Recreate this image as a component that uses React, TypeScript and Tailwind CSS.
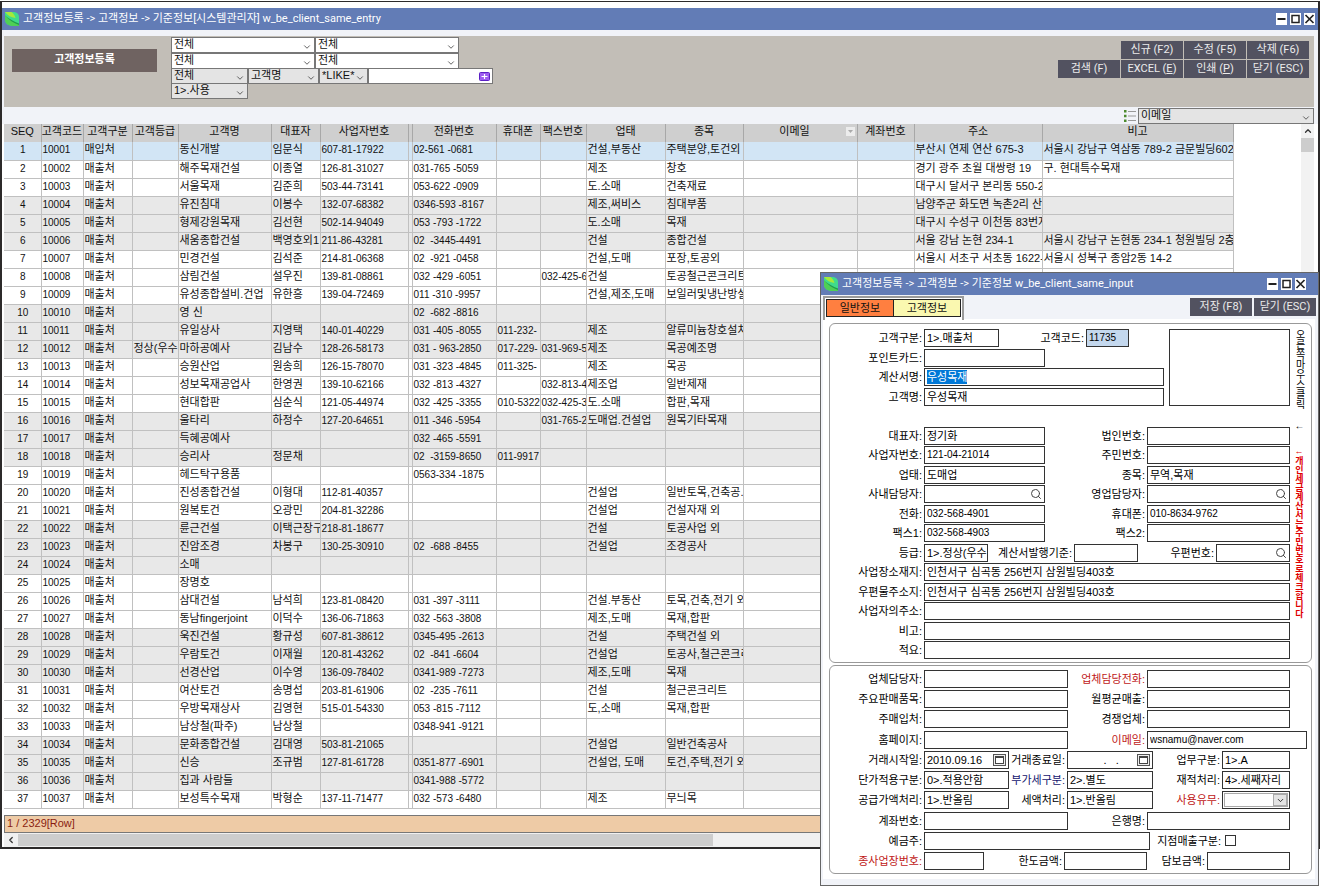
import { ReactNode } from "react";
import { ChevronDown, ChevronLeft, ChevronUp, Search } from "lucide-react";

type Column = { title: string; width: string; cell?: string };

const columns: Column[] = [
  { title: "SEQ", width: "w-[37px]", cell: "text-center text-[10px]" },
  { title: "고객코드", width: "w-[42px]", cell: "text-[10px]" },
  { title: "고객구분", width: "w-[49px]" },
  { title: "고객등급", width: "w-[46px]" },
  { title: "고객명", width: "w-[93px]" },
  { title: "대표자", width: "w-[49px]" },
  { title: "사업자번호", width: "w-[88px]", cell: "text-[10px]" },
  { title: "", width: "w-[4px]" },
  { title: "전화번호", width: "w-[84px]", cell: "text-[10px]" },
  { title: "휴대폰", width: "w-[44px]", cell: "text-[10px]" },
  { title: "팩스번호", width: "w-[46px]", cell: "text-[10px]" },
  { title: "업태", width: "w-[79px]" },
  { title: "종목", width: "w-[78px]" },
  { title: "이메일", width: "w-[114px]" },
  { title: "계좌번호", width: "w-[57px]" },
  { title: "주소", width: "w-[128px]" },
  { title: "비고", width: "w-[191px]" },
];

// 고객등급, 고객명, 대표자, 사업자번호, 전화번호, 휴대폰, 팩스번호, 업태, 종목, 주소, 비고
const clients: string[][] = [
  ["", "동신개발", "임문식", "607-81-17922", "02-561 -0681", "", "", "건설,부동산", "주택분양,토건외", "부산시 연제 연산 675-3", "서울시 강남구 역삼동 789-2 금문빌딩602호"],
  ["", "해주목재건설", "이종열", "126-81-31027", "031-765 -5059", "", "", "제조", "창호", "경기 광주 초월 대쌍령 19", "구. 현대특수목재"],
  ["", "서울목재", "김준희", "503-44-73141", "053-622 -0909", "", "", "도.소매", "건축재료", "대구시 달서구 본리동 550-2", ""],
  ["", "유진침대", "이봉수", "132-07-68382", "0346-593 -8167", "", "", "제조,써비스", "침대부품", "남양주군 화도면 녹촌2리 산", ""],
  ["", "형제강원목재", "김선현", "502-14-94049", "053 -793 -1722", "", "", "도.소매", "목재", "대구시 수성구 이천동 83번지", ""],
  ["", "새움종합건설", "백영호외1", "211-86-43281", "02  -3445-4491", "", "", "건설", "종합건설", "서울 강남 논현 234-1", "서울시 강남구 논현동 234-1 청원빌딩 2층"],
  ["", "민경건설", "김석준", "214-81-06368", "02  -921 -0458", "", "", "건설,도매", "포장,토공외", "서울시 서초구 서초동 1622-", "서울시 성북구 종암2동 14-2"],
  ["", "삼림건설", "설우진", "139-81-08861", "032 -429 -6051", "", "032-425-6", "건설", "토공철근콘크리트", "", ""],
  ["", "유성종합설비.건업", "유한흥", "139-04-72469", "011 -310 -9957", "", "", "건설,제조,도매", "보일러및냉난방설", "", ""],
  ["", "영 신", "", "", "02  -682 -8816", "", "", "", "", "", ""],
  ["", "유일상사", "지영택", "140-01-40229", "031 -405 -8055", "011-232-", "", "제조", "알류미늄창호설치", "", ""],
  ["정상(우수", "마하공예사", "김남수", "128-26-58173", "031 - 963-2850", "017-229-", "031-969-5", "제조", "목공예조명", "", ""],
  ["", "승원산업", "원송희", "126-15-78070", "031 -323 -4845", "011-325-", "", "제조", "목공", "", ""],
  ["", "성보목재공업사", "한영권", "139-10-62166", "032 -813 -4327", "", "032-813-4", "제조업", "일반제재", "", ""],
  ["", "현대합판", "심순식", "121-05-44974", "032 -425 -3355", "010-5322", "032-425-3", "도.소매", "합판,목재", "", ""],
  ["", "울타리", "하정수", "127-20-64651", "011 -346 -5954", "", "031-765-2", "도매업.건설업", "원목기타목재", "", ""],
  ["", "득혜공예사", "", "", "032 -465 -5591", "", "", "", "", "", ""],
  ["", "승리사", "정문채", "", "02  -3159-8650", "011-9917", "", "", "", "", ""],
  ["", "헤드탁구용품", "", "", "0563-334 -1875", "", "", "", "", "", ""],
  ["", "진성종합건설", "이형대", "112-81-40357", "", "", "", "건설업", "일반토목,건축공.", "", ""],
  ["", "원복토건", "오광민", "204-81-32286", "", "", "", "건설업", "건설자재 외", "", ""],
  ["", "륜근건설", "이택근장구", "218-81-18677", "", "", "", "건설", "토공사업 외", "", ""],
  ["", "진암조경", "차봉구", "130-25-30910", "02  -688 -8455", "", "", "건설업", "조경공사", "", ""],
  ["", "소매", "", "", "", "", "", "", "", "", ""],
  ["", "장명호", "", "", "", "", "", "", "", "", ""],
  ["", "삼대건설", "남석희", "123-81-08420", "031 -397 -3111", "", "", "건설.부동산", "토목,건축,전기 외", "", ""],
  ["", "동남fingerjoint", "이덕수", "136-06-71863", "032 -563 -3808", "", "", "제조,도매", "목재,합판", "", ""],
  ["", "욱진건설", "황규성", "607-81-38612", "0345-495 -2613", "", "", "건설", "주택건설 외", "", ""],
  ["", "우람토건", "이재월", "120-81-43262", "02  -841 -6604", "", "", "건설업", "토공사,철근콘크리", "", ""],
  ["", "선경산업", "이수영", "136-09-78402", "0341-989 -7273", "", "", "제조,도매", "목재", "", ""],
  ["", "여산토건", "송명섭", "203-81-61906", "02  -235 -7611", "", "", "건설", "철근콘크리트", "", ""],
  ["", "우방목재상사", "김영현", "515-01-54330", "053 -815 -7112", "", "", "도,소매", "목재,합판", "", ""],
  ["", "남상철(파주)", "남상철", "", "0348-941 -9121", "", "", "", "", "", ""],
  ["", "문화종합건설", "김대영", "503-81-21065", "", "", "", "건설업", "일반건축공사", "", ""],
  ["", "신승", "조규범", "127-81-61728", "0351-877 -6901", "", "", "건설업, 도매", "토건,주택,전기 외", "", ""],
  ["", "집과 사람들", "", "", "0341-988 -5772", "", "", "", "", "", ""],
  ["", "보성특수목재", "박형순", "137-11-71477", "032 -573 -6480", "", "", "제조", "무늬목", "", ""],
];

function rowBackground(index: number) {
  if (index === 0) return "bg-[#d2e5f5]";
  return Math.floor(index / 3) % 2 === 1 ? "bg-[#e8e8e8]" : "bg-white";
}

function Logo() {
  return (
    <svg width="14" height="14" viewBox="0 0 14 14" className="shrink-0">
      <path d="M0 0h9.500C12.500 0.500 14 2.500 14 5v9H7C3 13.500 0.500 11.500 0 8.500z" fill="#3fdc8c" />
      <path d="M0 3C4 7.500 8.500 10.500 14 12v2H7C3 13.500 0.500 11.500 0 8.500z" fill="#4fcf55" />
      <path d="M0 3.500C4 8 8.500 11 14 13v-1.500C9 9.500 4 7 0 3.500z" fill="#1f9d4c" />
      <path d="M0 0h6.500C8.500 1.500 10 3.500 10.500 6 6 5.500 2.500 3.500 0 0z" fill="#a6ea3a" />
    </svg>
  );
}

function TitleBar({ title, className }: { title: string; className: string }) {
  const btn = "flex h-3 w-[11px] items-center justify-center bg-white";
  return (
    <header className={`flex h-[22px] items-center bg-[#627cb6] pl-[3px] text-white ${className}`}>
      <Logo />
      <h1 className="ml-1 font-[Roboto,'Noto_Sans_CJK_KR',sans-serif] text-[11px]">{title}</h1>
      <div className="ml-auto flex gap-[3px]">
        <button className={btn} aria-label="최소화">
          <svg width="11" height="12" viewBox="0 0 11 12"><path d="M1.500 6h8" stroke="#222" strokeWidth="2" /></svg>
        </button>
        <button className={btn} aria-label="최대화">
          <svg width="11" height="12" viewBox="0 0 11 12"><rect x="2" y="2.500" width="7" height="7" fill="none" stroke="#222" strokeWidth="1.500" /></svg>
        </button>
        <button className={btn} aria-label="창 닫기">
          <svg width="11" height="12" viewBox="0 0 11 12"><path d="M1.500 2l8 8M9.500 2l-8 8" stroke="#222" strokeWidth="1.700" /></svg>
        </button>
      </div>
    </header>
  );
}

function ToolButton({ children }: { children: ReactNode }) {
  return (
    <button className="h-[18px] w-[62px] bg-[#525260] font-[Roboto,'Noto_Sans_CJK_KR',sans-serif] text-[11px] leading-[18px] whitespace-nowrap text-[#ececec]">
      {children}
    </button>
  );
}

function Combo({ label, value, className }: { label: string; value: string; className: string }) {
  return (
    <div className={`relative h-4 border border-[#777] ${className}`}>
      <select aria-label={label} className="block h-3 w-full appearance-none bg-transparent pl-0.5 leading-[12px] outline-none">
        <option>{value}</option>
      </select>
      <ChevronDown size={10} strokeWidth={2} className="pointer-events-none absolute top-1 right-0.5 text-[#444]" />
    </div>
  );
}

function FilterPanel() {
  return (
    <section className="mr-1 ml-0.5 flex h-[71px] items-start bg-[#c2beb7]">
      <h2 className="mt-[13px] ml-2 h-[23px] w-[145px] bg-[#6f6361] text-center text-[11px] leading-[20px] font-bold text-white">
        고객정보등록
      </h2>
      <div className="ml-3.5 flex flex-col">
        <div className="mt-px flex">
          <Combo label="조건 1" value="전체" className="w-36 bg-white" />
          <Combo label="조건 2" value="전체" className="w-36 bg-white" />
        </div>
        <div className="flex">
          <Combo label="조건 3" value="전체" className="w-36 bg-white" />
          <Combo label="조건 4" value="전체" className="w-36 bg-white" />
        </div>
        <div className="-mt-px flex">
          <Combo label="구분" value="전체" className="w-[77px] bg-[#e4e4e4]" />
          <Combo label="검색 항목" value="고객명" className="w-[71px] bg-[#e4e4e4]" />
          <Combo label="검색 방식" value="*LIKE*" className="w-[49px] bg-[#e4e4e4]" />
          <div className="flex h-4 w-[125px] items-center border border-[#777] bg-white pr-0.5">
            <input aria-label="검색어" className="h-full min-w-0 flex-1 px-0.5 outline-none" />
            <button aria-label="검색어 추가" className="h-[9px] w-[11px]">
              <svg width="11" height="9" viewBox="0 0 11 9" className="block">
                <rect x="0.500" y="0.500" width="10" height="8" rx="1" fill="#9d5cf0" stroke="#5a1fc4" />
                <path d="M5.500 2v5M2.500 4.500h6" stroke="#fff" strokeWidth="1.200" />
              </svg>
            </button>
          </div>
        </div>
        <Combo label="사용 여부" value="1>.사용" className="-mt-px w-[77px] bg-[#e4e4e4]" />
      </div>
      <div className="mt-[5px] mr-[5px] ml-auto flex flex-col items-end gap-px">
        <div className="flex gap-px">
          <ToolButton>신규 (F2)</ToolButton>
          <ToolButton>수정 (F5)</ToolButton>
          <ToolButton>삭제 (F6)</ToolButton>
        </div>
        <div className="flex gap-px">
          <ToolButton>검색 (F)</ToolButton>
          <ToolButton>EXCEL (<u>E</u>)</ToolButton>
          <ToolButton>인쇄 (<u>P</u>)</ToolButton>
          <ToolButton>닫기 (ESC)</ToolButton>
        </div>
      </div>
    </section>
  );
}

function ClientTable() {
  return (
    <table className="w-[1229px] shrink-0 table-fixed border-collapse leading-[15px]">
      <colgroup>
        {columns.map((c, i) => <col key={i} className={c.width} />)}
      </colgroup>
      <thead>
        <tr className="h-[18px] bg-[#cfcfcf]">
          {columns.map((c, i) => (
            <th key={i} className="overflow-hidden border-r border-[#a8a8a8] p-0 align-top font-normal whitespace-nowrap">
              {c.title === "이메일" ? (
                <span className="flex items-center pr-0.5">
                  <span className="flex-1">{c.title}</span>
                  <svg width="9" height="9" viewBox="0 0 9 9"><path d="M0 0h9v9H0z" fill="#ececec" /><path d="M2 3h5L4.500 6z" fill="#aaa" /></svg>
                </span>
              ) : c.title}
            </th>
          ))}
        </tr>
      </thead>
      <tbody>
        {clients.map((c, i) => {
          const cells = [String(i + 1), String(10001 + i), i === 0 ? "매입처" : "매출처", ...c.slice(0, 4), "", ...c.slice(4, 9), "", "", ...c.slice(9)];
          return (
            <tr key={i} className={`h-[18px] ${rowBackground(i)}`}>
              {cells.map((text, j) => (
                <td key={j} className={`overflow-hidden border-r border-b border-[#c0c0c0] py-0 pr-0 pl-px align-top whitespace-pre ${columns[j].cell ?? ""}`}>
                  {text}
                </td>
              ))}
            </tr>
          );
        })}
      </tbody>
    </table>
  );
}

function ListWindow() {
  return (
    <main className="border-t border-r-2 border-b-2 border-l-2 border-[#2c2a2a] bg-white pt-1.5">
      <TitleBar title="고객정보등록 -> 고객정보 -> 기준정보[시스템관리자] w_be_client_same_entry" className="pr-[3px]" />
      <div className="bg-[#f1f3f8] pt-1.5">
        <FilterPanel />
        <div className="mr-1 flex h-[17px] items-center justify-end gap-0.5">
          <svg width="12" height="12" viewBox="0 0 12 12">
            <path d="M0 0h2.500v2.500H0zM0 4.700h2.500v2.500H0zM0 9.400h2.500v2.500H0z" fill="#4c8a2c" />
            <path d="M4 1.500h8M4 6h8M4 10.500h8" stroke="#999" />
          </svg>
          <Combo label="열 선택" value="이메일" className="w-44 bg-[#e4e4e4]" />
        </div>
      </div>
      <div className="mr-1 ml-0.5 flex">
        <div className="flex min-w-0 flex-1 overflow-hidden">
          <ClientTable />
        </div>
        <div className="flex w-[13px] flex-col items-center bg-[#f2f2f2]">
          <ChevronUp size={10} strokeWidth={3} className="my-0.5 shrink-0 text-[#333]" />
          <div className="h-3.5 w-full bg-[#cdcdcd]" />
        </div>
      </div>
      <div className="mt-1.5 mr-1 ml-0.5">
        <p className="h-[18px] border border-[#777] bg-[#eecba6] pl-0.5 leading-[15px] text-[#8a1c10]">1 / 2329[Row]</p>
        <div className="flex h-3.5 items-center bg-[#f0f0f0]">
          <ChevronLeft size={10} strokeWidth={3} className="mx-0.5 text-[#333]" />
          <div className="h-3 w-[695px] bg-[#cdcdcd]" />
        </div>
      </div>
    </main>
  );
}

type FieldProps = {
  label: string;
  id: string;
  value?: string;
  labelClass?: string;
  boxClass: string;
  inputClass?: string;
  icon?: ReactNode;
};

function Field({ label, id, value = "", labelClass = "w-[94px]", boxClass, inputClass = "w-full", icon }: FieldProps) {
  return (
    <>
      <label htmlFor={id} className={`shrink-0 pr-0.5 text-right whitespace-nowrap ${labelClass}`}>{label}:</label>
      <div className={`flex h-[18px] items-center border border-[#333] pl-0.5 ${boxClass}`}>
        <input id={id} defaultValue={value} className={`h-3.5 min-w-0 outline-none ${inputClass}`} />
        {icon}
      </div>
    </>
  );
}

function SearchIcon() {
  return (
    <button aria-label="찾기" className="mr-0.5 shrink-0 text-[#444]">
      <Search size={12} strokeWidth={2} />
    </button>
  );
}

function CalendarIcon() {
  return (
    <button aria-label="날짜 선택" className="mr-0.5 shrink-0">
      <svg width="13" height="12" viewBox="0 0 13 12" className="block">
        <rect x="0.500" y="0.500" width="12" height="11" fill="#eee" stroke="#555" />
        <rect x="2.500" y="2.500" width="8" height="7" fill="#fff" stroke="#444" />
        <path d="M2 3h9" stroke="#444" strokeWidth="2" />
      </svg>
    </button>
  );
}

function GeneralPanel() {
  const row = "col-span-2 col-start-1 flex items-center";
  const half = "w-[121px] shrink-0";
  const right = "w-[143px] shrink-0";
  const digits = "w-full text-[10px]";
  return (
    <section className="grid h-[340px] grid-cols-[1fr_126px_21px] grid-rows-[repeat(17,18px)] content-between rounded-md border border-[#999] pt-[5px] pb-[3px]">
      <div className="col-start-1 row-start-1 flex items-center">
        <Field label="고객구분" id="kind" value="1>.매출처" boxClass="w-[75px]" />
        <Field label="고객코드" id="code" value="11735" labelClass="w-[87px]" boxClass="w-[43px] bg-[#c4d8ee]" inputClass="w-full bg-transparent text-[10px]" />
      </div>
      <div className="col-start-2 row-span-4 row-start-1 ml-[5px] border border-[#333]" />
      <p className="col-start-3 row-span-5 row-start-1 ml-[3px] justify-self-start text-[10px] leading-[12px] whitespace-nowrap [text-orientation:upright] [writing-mode:vertical-rl]">
        오른쪽마우스클릭 ←
      </p>
      <div className="col-start-1 row-start-2 flex items-center">
        <Field label="포인트카드" id="point" boxClass="w-[121px]" />
      </div>
      <div className="col-start-1 row-start-3 flex items-center">
        <Field label="계산서명" id="bill" value="우성목재" boxClass="flex-1" inputClass="field-sizing-content bg-[#0078d7] text-white" />
      </div>
      <div className="col-start-1 row-start-4 flex items-center">
        <Field label="고객명" id="name" value="우성목재" boxClass="flex-1" />
      </div>
      <div className={`row-start-6 ${row}`}>
        <Field label="대표자" id="owner" value="정기화" boxClass={half} />
        <Field label="법인번호" id="corp" labelClass="flex-1" boxClass={right} />
      </div>
      <p className="col-start-3 row-span-10 row-start-7 ml-[3px] justify-self-start text-[9px] leading-[12px] font-bold whitespace-nowrap text-[#e00000] [text-orientation:upright] [writing-mode:vertical-rl]">
        ←개인세금계산서는주민번호로체크합니다
      </p>
      <div className={`row-start-7 ${row}`}>
        <Field label="사업자번호" id="biz" value="121-04-21014" boxClass={half} inputClass={digits} />
        <Field label="주민번호" id="resident" labelClass="flex-1" boxClass={right} />
      </div>
      <div className={`row-start-8 ${row}`}>
        <Field label="업태" id="trade" value="도매업" boxClass={half} />
        <Field label="종목" id="item" value="무역,목재" labelClass="flex-1" boxClass={right} />
      </div>
      <div className={`row-start-9 ${row}`}>
        <Field label="사내담당자" id="staff" boxClass={half} icon={<SearchIcon />} />
        <Field label="영업담당자" id="sales" labelClass="flex-1" boxClass={right} icon={<SearchIcon />} />
      </div>
      <div className={`row-start-10 ${row}`}>
        <Field label="전화" id="tel" value="032-568-4901" boxClass={half} inputClass={digits} />
        <Field label="휴대폰" id="mobile" value="010-8634-9762" labelClass="flex-1" boxClass={right} inputClass={digits} />
      </div>
      <div className={`row-start-11 ${row}`}>
        <Field label="팩스1" id="fax1" value="032-568-4903" boxClass={half} inputClass={digits} />
        <Field label="팩스2" id="fax2" labelClass="flex-1" boxClass={right} />
      </div>
      <div className={`row-start-12 ${row}`}>
        <Field label="등급" id="grade" value="1>.정상(우수" boxClass="w-16" />
        <Field label="계산서발행기준" id="basis" labelClass="w-[86px]" boxClass="w-16" />
        <Field label="우편번호" id="zip" labelClass="flex-1" boxClass="w-[74px]" icon={<SearchIcon />} />
      </div>
      <div className={`row-start-13 ${row}`}>
        <Field label="사업장소재지" id="addr1" value="인천서구 심곡동 256번지 삼원빌딩403호" boxClass="flex-1" />
      </div>
      <div className={`row-start-14 ${row}`}>
        <Field label="우편물주소지" id="addr2" value="인천서구 심곡동 256번지 삼원빌딩403호" boxClass="flex-1" />
      </div>
      <div className={`row-start-15 ${row}`}>
        <Field label="사업자의주소" id="addr3" boxClass="flex-1" />
      </div>
      <div className={`row-start-16 ${row}`}>
        <Field label="비고" id="remark" boxClass="flex-1" />
      </div>
      <div className={`row-start-17 ${row}`}>
        <Field label="적요" id="summary" boxClass="flex-1" />
      </div>
    </section>
  );
}

function TradePanel() {
  const row = "flex items-center pr-[21px]";
  const red = "flex-1 text-[#c01818]";
  return (
    <section className="mt-0.5 flex h-[209px] flex-col justify-between rounded-md border border-[#999] pt-1 pb-[3px]">
      <div className={row}>
        <Field label="업체담당자" id="contact" boxClass="w-36" />
        <Field label="업체담당전화" id="contactTel" labelClass={red} boxClass="w-[143px]" />
      </div>
      <div className={row}>
        <Field label="주요판매품목" id="goods" boxClass="w-36" />
        <Field label="월평균매출" id="monthly" labelClass="flex-1" boxClass="w-[143px]" />
      </div>
      <div className={row}>
        <Field label="주매입처" id="supplier" boxClass="w-36" />
        <Field label="경쟁업체" id="rival" labelClass="flex-1" boxClass="w-[143px]" />
      </div>
      <div className="flex items-center pr-1">
        <Field label="홈페이지" id="homepage" boxClass="w-36" />
        <Field label="이메일" id="email" value="wsnamu@naver.com" labelClass={red} boxClass="w-40" inputClass="w-full text-[10px]" />
      </div>
      <div className={row}>
        <Field label="거래시작일" id="start" value="2010.09.16" boxClass="w-[85px]" icon={<CalendarIcon />} />
        <Field label="거래종료일" id="end" value="     .   ." labelClass="w-[58px]" boxClass="w-[86px]" inputClass="w-full text-center" icon={<CalendarIcon />} />
        <Field label="업무구분" id="work" value="1>.A" labelClass="flex-1" boxClass="w-[68px]" />
      </div>
      <div className={row}>
        <Field label="단가적용구분" id="price" value="0>.적용안함" boxClass="w-[85px]" />
        <Field label="부가세구분" id="vat" value="2>.별도" labelClass="w-[58px] text-[#14146e]" boxClass="w-[86px]" />
        <Field label="재적처리" id="volume" value="4>.세째자리" labelClass="flex-1" boxClass="w-[68px]" />
      </div>
      <div className={row}>
        <Field label="공급가액처리" id="supply" value="1>.반올림" boxClass="w-[85px]" />
        <Field label="세액처리" id="tax" value="1>.반올림" labelClass="w-[58px]" boxClass="w-[86px]" />
        <label htmlFor="use" className="flex-1 pr-0.5 text-right text-[#c01818]">사용유무:</label>
        <div className="relative h-[18px] w-[68px] border border-[#333] p-px">
          <select id="use" className="block h-3.5 w-full appearance-none border border-[#aaa] outline-none">
            <option></option>
          </select>
          <span className="pointer-events-none absolute top-0.5 right-0.5 flex h-3 w-3.5 items-center justify-center border border-[#aaa] bg-[#e4e4e4]">
            <ChevronDown size={9} />
          </span>
        </div>
      </div>
      <div className={row}>
        <Field label="계좌번호" id="account" boxClass="w-36" />
        <Field label="은행명" id="bank" labelClass="flex-1" boxClass="w-[143px]" />
      </div>
      <div className={row}>
        <Field label="예금주" id="holder" boxClass="w-[226px]" />
        <label htmlFor="branch" className="w-[73px] pr-0.5 text-right whitespace-nowrap">지점매출구분:</label>
        <input id="branch" type="checkbox" className="ml-0.5 size-[11px] appearance-none border border-[#333] bg-white" />
      </div>
      <div className={row}>
        <Field label="종사업장번호" id="sub" labelClass="w-[94px] text-[#c01818]" boxClass="w-[60px]" />
        <Field label="한도금액" id="limit" labelClass="w-20" boxClass="w-[83px]" />
        <Field label="담보금액" id="security" labelClass="flex-1" boxClass="w-[83px]" />
      </div>
    </section>
  );
}

function InputWindow() {
  return (
    <div className="absolute top-[272px] right-px w-[499px] border border-[#666] bg-[#f1f3f8] pb-1.5">
      <TitleBar title="고객정보등록 -> 고객정보 -> 기준정보 w_be_client_same_input" className="pr-3" />
      <div className="flex h-6 items-start pr-0.5 pl-0.5">
        <div className="mt-px flex h-full border-t-2 border-r-2 border-l-2 border-[#9a9a9a] bg-white p-px text-[11px] leading-[16px]">
          <button className="h-[18px] w-[68px] border border-[#222] bg-[#ff7f40]">일반정보</button>
          <button className="-ml-px h-[18px] w-[68px] border border-[#222] bg-[#faf8b0]">고객정보</button>
        </div>
        <div className="mt-[3px] ml-auto flex gap-0.5">
          <ToolButton>저장 (F8)</ToolButton>
          <ToolButton>닫기 (ESC)</ToolButton>
        </div>
      </div>
      <form className="mr-[3px] ml-0.5 bg-white pt-1 pr-[3px] pb-[5px] pl-1.5 text-black" onSubmit={(e) => e.preventDefault()}>
        <GeneralPanel />
        <TradePanel />
      </form>
    </div>
  );
}

export default function App() {
  return (
    <div className="relative min-h-screen overflow-hidden bg-white pt-px font-['Liberation_Sans','Noto_Sans_CJK_KR',sans-serif] text-[11px] leading-[16px] text-[#111]">
      <ListWindow />
      <InputWindow />
    </div>
  );
}
